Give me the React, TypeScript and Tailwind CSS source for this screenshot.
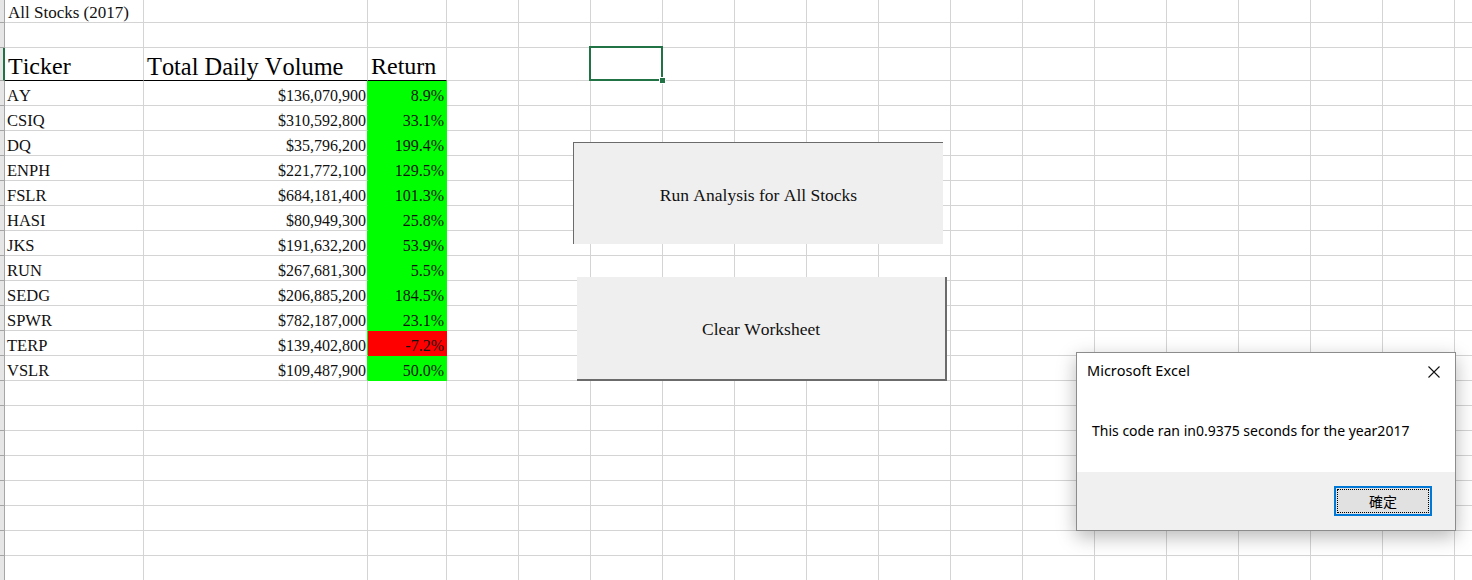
import React from "react";

const data: [string, string, string][] = [
  ["AY", "$136,070,900", "8.9%"],
  ["CSIQ", "$310,592,800", "33.1%"],
  ["DQ", "$35,796,200", "199.4%"],
  ["ENPH", "$221,772,100", "129.5%"],
  ["FSLR", "$684,181,400", "101.3%"],
  ["HASI", "$80,949,300", "25.8%"],
  ["JKS", "$191,632,200", "53.9%"],
  ["RUN", "$267,681,300", "5.5%"],
  ["SEDG", "$206,885,200", "184.5%"],
  ["SPWR", "$782,187,000", "23.1%"],
  ["TERP", "$139,402,800", "-7.2%"],
  ["VSLR", "$109,487,900", "50.0%"],
];

const NUM_COLS = 19;
const NUM_ROWS = 23;

function cellClass(r: number, c: number): string {
  if (c === 0) {
    if (r === 2) return "bg-[#e6e6e6] border-b border-b-[#a6a6a6] border-r-2 border-r-[#217346]";
    return "bg-[#e6e6e6] border-b border-r border-[#a6a6a6]";
  }
  const isData = r >= 3 && r <= 14;
  if (r === 2 && c >= 1 && c <= 3) {
    return "border-r border-r-[#d4d4d4] border-b border-b-black flex items-end";
  }
  if (isData && c === 3) {
    const neg = data[r - 3][2].startsWith("-");
    return neg
      ? "bg-[#ff0000] border-r border-b border-[#ff0000] flex items-end justify-end"
      : "bg-[#00ff00] border-r border-b border-[#00ff00] flex items-end justify-end";
  }
  if (isData && c === 2) {
    return "border-r border-r-[#00ff00] border-b border-b-[#d4d4d4] flex items-end justify-end";
  }
  return "border-r border-b border-[#d4d4d4] flex items-end";
}

function cellContent(r: number, c: number): React.ReactNode {
  if (r === 0 && c === 1)
    return <span className="pl-[3px] text-[17px] leading-[18px] text-[#111] whitespace-nowrap">All Stocks (2017)</span>;
  if (r === 2) {
    if (c === 1) return <span className="pl-[3px] text-[24px] leading-[27px] text-black whitespace-nowrap">Ticker</span>;
    if (c === 2) return <span className="pl-[3px] text-[24.4px] leading-[27px] text-black whitespace-nowrap">Total Daily Volume</span>;
    if (c === 3) return <span className="pl-[3px] text-[24px] leading-[27px] text-black whitespace-nowrap">Return</span>;
    if (c === 6)
      return (
        <div className="absolute z-10 left-[-2px] top-[-2px] right-[-1px] bottom-[-1px] border-2 border-[#217346]">
          <div className="absolute right-[-5px] bottom-[-5px] w-[7px] h-[7px] bg-[#217346] border border-white" />
        </div>
      );
  }
  if (r >= 3 && r <= 14) {
    const row = data[r - 3];
    if (c === 1) return <span className="pl-[2px] text-[16.5px] leading-[18px] text-[#111] whitespace-nowrap">{row[0]}</span>;
    if (c === 2) return <span className="pr-[1px] text-[16px] leading-[18px] text-[#111] whitespace-nowrap">{row[1]}</span>;
    if (c === 3) return <span className="pr-[2px] text-[16px] leading-[18px] text-[#111] whitespace-nowrap">{row[2]}</span>;
  }
  return null;
}

export default function App() {
  const cells: React.ReactNode[] = [];
  for (let r = 0; r < NUM_ROWS; r++) {
    for (let c = 0; c < NUM_COLS; c++) {
      cells.push(
        <div key={`${r}-${c}`} className={`relative ${cellClass(r, c)}`}>
          {cellContent(r, c)}
        </div>
      );
    }
  }
  return (
    <div className="relative w-[1472px] h-[580px] overflow-hidden bg-white font-['Liberation_Serif',serif] [font-kerning:none]">
      <div className="grid grid-cols-[5px_139px_224px_79px_repeat(15,72px)] grid-rows-[23px_25px_33px_repeat(20,25px)]">
        {cells}
      </div>

      {/* Macro buttons */}
      <div className="absolute left-[573px] top-[142px] w-[370px] h-[102px] bg-[#efefef] border-t border-l border-[#6b6b6b] flex items-center justify-center">
        <span className="text-[17.5px] text-[#111] leading-[20px] pt-[2px]">Run Analysis for All Stocks</span>
      </div>
      <div className="absolute left-[577px] top-[277px] w-[370px] h-[104px] bg-[#efefef] border-r-2 border-b-2 border-[#6b6b6b] flex items-center justify-center">
        <span className="text-[17.5px] text-[#111] leading-[20px] pt-[2px]">Clear Worksheet</span>
      </div>

      {/* Message box */}
      <div className="absolute z-20 left-[1076px] top-[352px] w-[380px] h-[179px] border border-[#8c8c8c] bg-white shadow-[0_6px_18px_rgba(0,0,0,0.28)] flex flex-col font-['Noto_Sans',sans-serif]">
        <div className="flex items-start justify-between pl-[10px] pr-[15px] pt-[7px]">
          <span className="text-[14.5px] leading-[20px] text-black">Microsoft Excel</span>
          <svg className="mt-[6px]" width="12" height="12" viewBox="0 0 12 12">
            <path d="M0.5 0.5 L11.5 11.5 M11.5 0.5 L0.5 11.5" stroke="#111" strokeWidth="1.1" fill="none" />
          </svg>
        </div>
        <div className="pl-[15px] mt-[41px] text-[14px] leading-[20px] text-black whitespace-nowrap">
          This code ran in0.9375 seconds for the year2017
        </div>
        <div className="mt-auto h-[58px] bg-[#f0f0f0] flex items-center justify-end pr-[23px]">
          <div className="w-[98px] h-[30px] border-2 border-[#0078d7] bg-[#e1e1e1] p-px">
            <div className="w-full h-full border border-dotted border-black flex items-center justify-center">
              <span className="text-[14px] leading-[18px] text-black font-['Noto_Sans_CJK_TC',sans-serif]">確定</span>
            </div>
          </div>
        </div>
      </div>
    </div>
  );
}
